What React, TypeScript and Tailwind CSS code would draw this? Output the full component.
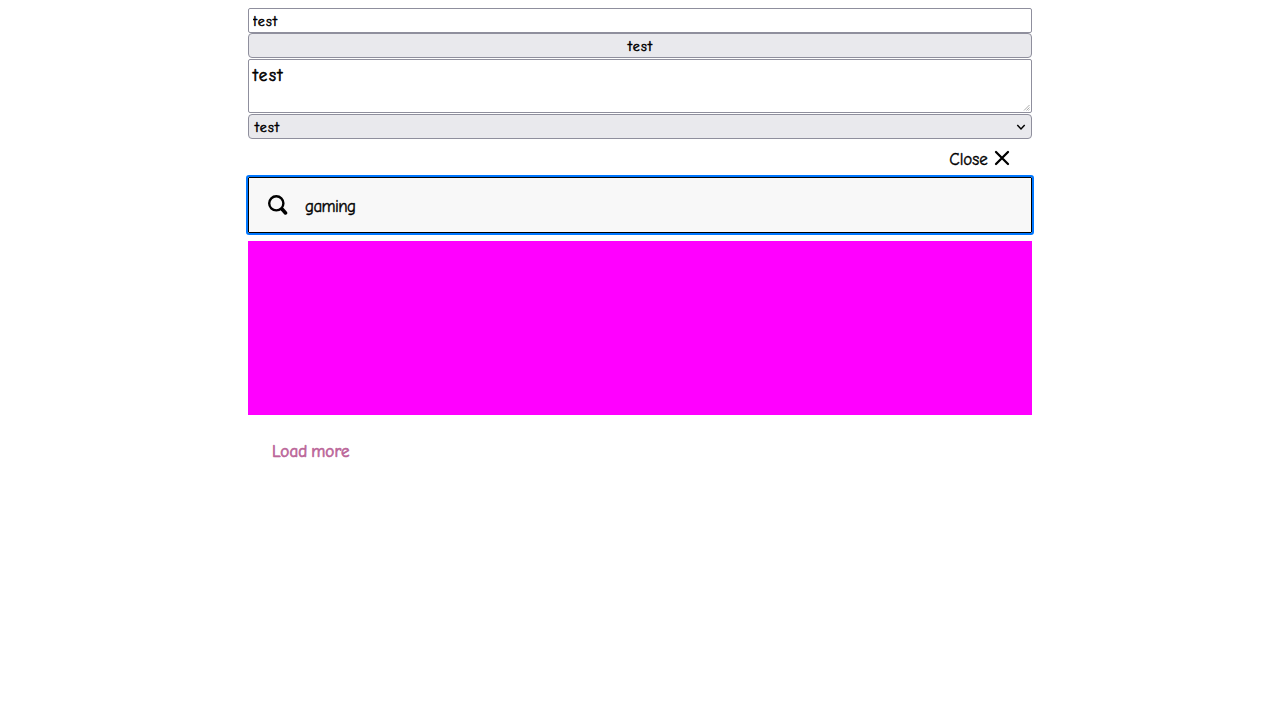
import { useState } from "react";

export default function App() {
  const [query, setQuery] = useState("gaming");
  return (
    <main className="mx-auto flex w-[784px] flex-col pt-2 font-['Comic_Sans_MS','Comic_Neue',Lato,sans-serif] text-base leading-5 font-medium text-black [-webkit-text-stroke:0.4px_currentColor]">
      <input
        defaultValue="test"
        className="h-[25px] rounded-[2px] border border-[#8f8f9d] bg-white pt-px pr-[3px] pl-1 text-[14px] tracking-[1.2px] outline-none [-webkit-text-stroke:0.5px_currentColor]"
      />
      <button className="h-[25px] rounded-[4px] border border-[#8f8f9d] bg-[#e9e9ed] pt-[2px] pl-px text-center text-[14px] leading-[22px] tracking-[1.2px] [-webkit-text-stroke:0.5px_currentColor]">
        test
      </button>
      <div className="relative mt-px h-[54px]">
        <textarea
          defaultValue="test"
          className="block h-full w-full resize-none rounded-[2px] border border-[#8f8f9d] bg-white pt-[5px] pr-[3px] pl-1 text-[17px] leading-[22px] tracking-[1.5px] outline-none [-webkit-text-stroke:0.6px_currentColor]"
        />
        <svg className="absolute right-[2px] bottom-[2px] h-[7px] w-[7px]" viewBox="0 0 7 7" fill="none" stroke="#aaa">
          <path d="M1 6.5 6.5 1M3.5 6.5l3-3M5.5 6.5l1-1" />
        </svg>
      </div>
      <button className="mt-px flex h-[25px] items-center justify-between rounded-[4px] border border-[#8f8f9d] bg-[#e9e9ed] pr-[5px] pl-[6px] text-[14px] tracking-[1.2px] [-webkit-text-stroke:0.5px_currentColor]">
        <span className="pt-[2px]">test</span>
        <svg className="h-[10px] w-[10px]" viewBox="0 0 10 10" fill="none" stroke="#000" strokeWidth="1.5">
          <path d="m1.3 3.1 3.7 3.8 3.7-3.8" />
        </svg>
      </button>
      <button className="mr-[22px] flex h-[38px] items-center self-end text-[17px]">
        <span className="w-[39px] pt-[3px] whitespace-nowrap">Close</span>
        <svg className="ml-[6px] h-4 w-4" viewBox="0 0 16 16" fill="none" stroke="#000" strokeWidth="2.3" strokeLinecap="round">
          <path d="m2 2 12 12M14 2 2 14" />
        </svg>
      </button>
      <label className="flex h-14 items-center rounded-[1px] border border-black bg-[#f8f8f8] outline-2 outline-[#0077ff]">
        <svg className="ml-[19px] h-5 w-5 shrink-0" viewBox="0 0 20 20" fill="none" stroke="#000">
          <circle cx="8.3" cy="8.3" r="7.1" strokeWidth="2.4" />
          <path d="m14 14 3.5 4" strokeWidth="3.5" strokeLinecap="round" />
        </svg>
        <input
          value={query}
          onChange={(event) => setQuery(event.target.value)}
          className="ml-[17px] h-full flex-1 bg-transparent pt-[2px] text-[17px] tracking-[-0.6px] outline-none"
        />
      </label>
      <section className="mt-2 h-[174px] bg-[#ff00ff]" />
      <button className="mt-[25px] ml-6 h-6 self-start text-[17px] tracking-[0.1px] [word-spacing:-2px] text-[#bb6699] [-webkit-text-stroke:0.7px_currentColor]">Load more</button>
    </main>
  );
}
